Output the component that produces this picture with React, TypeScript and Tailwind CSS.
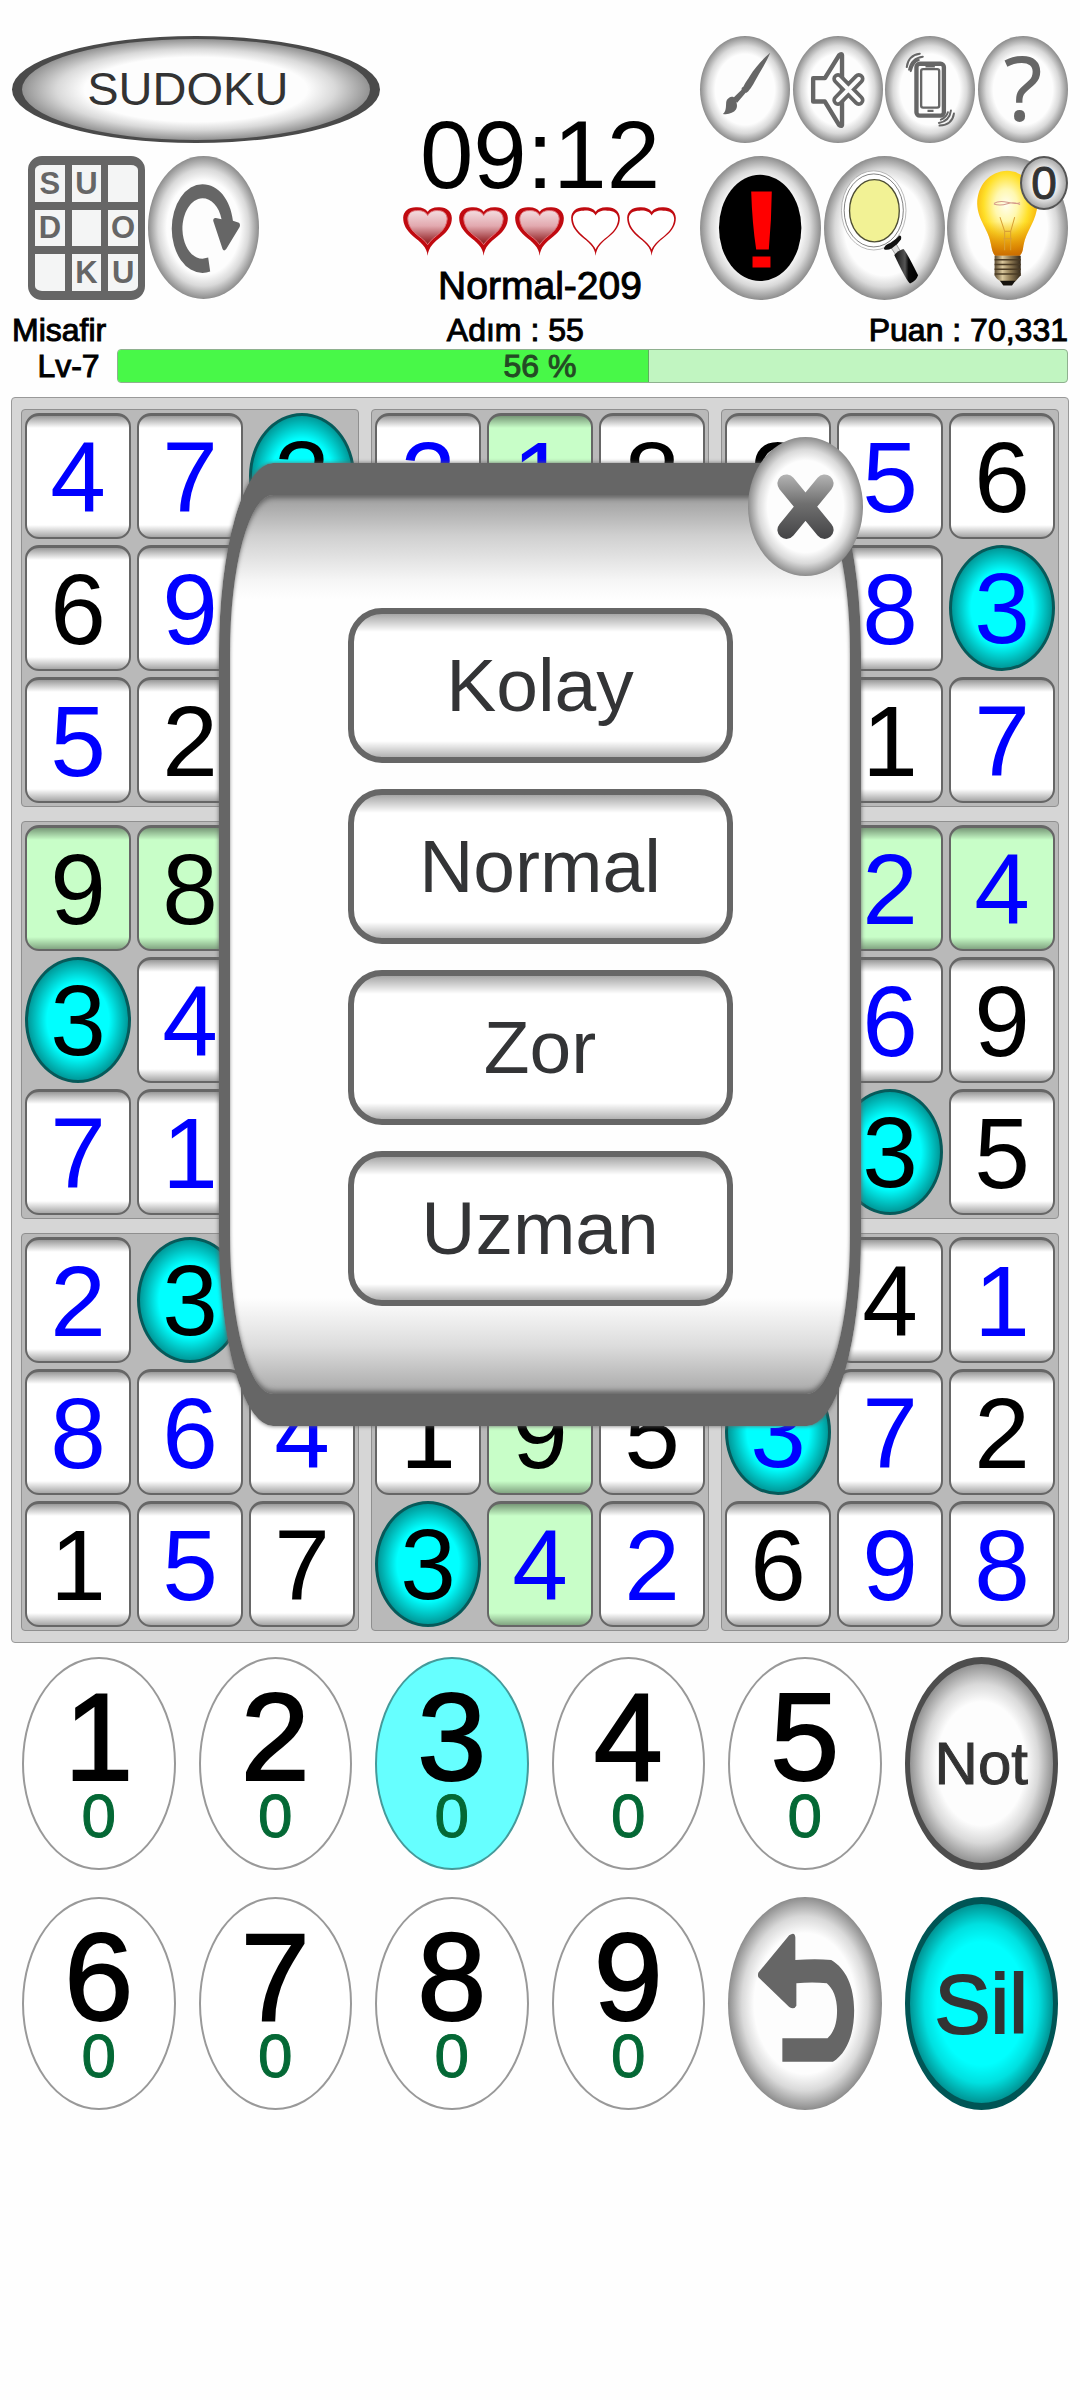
import React from "react";

/* A dot is a cell that lies wholly under the dialog. */
const digits = [
  "473218956",
  "69.....83",
  "52.....17",
  "98.....24",
  "34.....69",
  "71.....35",
  "23.....41",
  "864195372",
  "157342698",
];

/* "b" marks a digit entered by the player, "k" a given one. */
const owners = [
  "bbkbbkkbk",
  "kbbkbkbbb",
  "bkkbkbkkb",
  "kkbkbkbbb",
  "kbkbkbkbk",
  "bbkbkbkkk",
  "bkbkbkbkb",
  "bbbkkkbbk",
  "kbkkbbkbb",
];

const SELECTED_ROW = 3;
const SELECTED_COL = 4;
const SELECTED_DIGIT = "3";

const ellipseFill =
  "rounded-[50%] bg-[radial-gradient(closest-side,#fdfdfd_66%,#d9d9d9_82%,#8c8c8c_100%)]";
const heavyText = "[-webkit-text-stroke:1px_currentColor]";

function Cell({ row, col }: { row: number; col: number }) {
  const digit = digits[row][col];
  const ink = owners[row][col] === "b" ? "text-[#0000ff]" : "text-black";
  let skin =
    "rounded-[14px] border-2 border-t-3 border-[#666] bg-[linear-gradient(to_bottom,rgba(0,0,0,0.4),rgba(0,0,0,0)_12px,rgba(0,0,0,0)_calc(100%-12px),rgba(0,0,0,0.35))] ";
  if (digit === SELECTED_DIGIT) {
    skin =
      "rounded-[50%] border-3 border-[#065a5a] bg-[#00ffff] bg-[radial-gradient(closest-side,rgba(0,0,0,0)_62%,rgba(0,0,0,0.4)_100%)]";
  } else if (row === SELECTED_ROW || col === SELECTED_COL) {
    skin += "bg-[#c8fec8]";
  } else {
    skin += "bg-white";
  }
  return (
    <button
      type="button"
      aria-label={`Satır ${row + 1}, sütun ${col + 1}`}
      className={`flex h-[126px] items-center justify-center text-[100px] leading-[100px] ${skin} ${ink}`}
    >
      {digit === "." ? null : digit}
    </button>
  );
}

function Board() {
  return (
    <div className="grid grid-cols-3 gap-x-3 gap-y-[14px] rounded border border-[#999] bg-[#d6d6d6] px-[9px] py-[11px]">
      {[0, 1, 2, 3, 4, 5, 6, 7, 8].map((block) => (
        <div
          key={block}
          className="grid grid-cols-3 gap-[6px] rounded border border-[#8f8f8f] bg-[#b9b9b9] p-[3px]"
        >
          {[0, 1, 2, 3, 4, 5, 6, 7, 8].map((i) => (
            <Cell
              key={i}
              row={Math.floor(block / 3) * 3 + Math.floor(i / 3)}
              col={(block % 3) * 3 + (i % 3)}
            />
          ))}
        </div>
      ))}
    </div>
  );
}

function Heart({ full }: { full: boolean }) {
  return (
    <svg viewBox="68 320 147 148" className="size-[49px]" aria-hidden="true">
      <defs>
        <linearGradient id="heartFill" x1="0" y1="0" x2="0" y2="1">
          <stop offset="0" stopColor="#f3dcdf" />
          <stop offset="0.45" stopColor="#e2a9af" />
          <stop offset="0.8" stopColor="#a9474b" />
          <stop offset="1" stopColor="#8a1414" />
        </linearGradient>
      </defs>
      <path
        fill="#c00a10"
        d="M142 468C140 440 120 426 98 408C78 391 68 374 68 352C69 333 84 321 106 321C124 320 135 325 142 334C149 325 160 320 178 321C200 321 214 334 215 353C215 375 204 392 184 408C162 426 144 440 142 468Z"
      />
      {full ? (
        <path
          fill="url(#heartFill)"
          stroke="#e0747a"
          strokeWidth="3"
          d="M142 434C134 420 116 410 102 397C90 386 82 370 82 354C84 338 94 331 108 331C124 330 136 334 142 346C148 334 160 330 175 331C190 331 200 340 201 356C200 372 192 386 180 397C166 410 150 420 142 434Z"
        />
      ) : (
        <path
          fill="#fff"
          d="M142 448C136 432 116 418 102 405C84 390 74 374 73 354C74 338 86 331 106 331C124 330 136 334 142 346C148 334 160 330 176 331C198 331 209 338 210 356C209 374 200 390 182 405C166 418 148 432 142 448Z"
        />
      )}
    </svg>
  );
}

function BrushIcon() {
  return (
    <svg viewBox="60 48 268 320" preserveAspectRatio="none" className="size-full" fill="#666">
      <path d="M269 98C250 114 224 142 208 168C198 184 192 192 189 200C184 202 183 206 184 209L158 234C161 237 168 243 170 248L196 218C199 218 204 214 206 210C212 204 218 194 223 184C240 154 262 118 269 98Z" />
      <path d="M158 230C148 230 140 236 138 246C137 260 138 274 128 281C144 284 160 278 167 268C172 260 170 250 168 246C167 238 163 232 158 230Z" />
    </svg>
  );
}

function MutedIcon() {
  return (
    <svg viewBox="337 48 268 320" preserveAspectRatio="none" className="size-full" fill="none" strokeLinecap="round" strokeLinejoin="round">
      <path stroke="#666" strokeWidth="13" d="M397 174H432L474 106Q482 98 483 106V314Q482 320 474 314L432 244H397Z" />
      <path stroke="#666" strokeWidth="34" d="M471 176L533 240M533 176L471 240" />
      <path stroke="#fdfdfd" strokeWidth="12" d="M471 176L533 240M533 176L471 240" />
    </svg>
  );
}

function VibrateIcon() {
  return (
    <svg viewBox="615 48 269 320" preserveAspectRatio="none" className="size-full" fill="none" stroke="#666">
      <rect x="709" y="131" width="82" height="155" rx="10" strokeWidth="13" />
      <rect x="723" y="147" width="54" height="115" rx="6" strokeWidth="7" />
      <path strokeWidth="7" d="M736 139H764M742 272H760" />
      <path strokeWidth="6" strokeLinecap="round" d="M680 141Q684 106 719 101M687 149Q694 114 728 110M692 153Q698 126 716 120M778 316Q816 314 821 280M776 308Q808 302 812 271M782 298Q798 292 803 276" />
    </svg>
  );
}

function AlertIcon() {
  return (
    <svg viewBox="58 408 364 431" preserveAspectRatio="none" className="size-full">
      <ellipse cx="239" cy="623" rx="124" ry="159" fill="#000" />
      <path fill="#f00" d="M212 514H274Q273 600 265 688H227Q215 610 212 514ZM216 709H270V742H216Z" />
    </svg>
  );
}

function MagnifierIcon() {
  return (
    <svg viewBox="432 411 360 426" preserveAspectRatio="none" className="size-full">
      <defs>
        <linearGradient id="grip" x1="0" y1="0" x2="1" y2="0">
          <stop offset="0" stopColor="#111" />
          <stop offset="0.45" stopColor="#555" />
          <stop offset="0.6" stopColor="#0a0a0a" />
          <stop offset="1" stopColor="#000" />
        </linearGradient>
      </defs>
      <ellipse cx="580" cy="572" rx="96" ry="117" fill="#fff" stroke="#999" strokeWidth="2" />
      <ellipse cx="580" cy="572" rx="88" ry="108" fill="none" stroke="#444" strokeWidth="2" />
      <ellipse cx="582" cy="573" rx="74" ry="92" fill="#f2f295" stroke="#4d4d33" strokeWidth="4" />
      <path fill="#ddd" stroke="#777" strokeWidth="2" d="M630 680L646 670L660 694L646 704Z" />
      <path fill="#111" d="M610 686Q612 674 630 668Q648 656 656 646Q664 646 661 658Q652 672 634 684Q618 692 610 686Z" />
      <path fill="url(#grip)" d="M641 704Q652 690 668 686Q674 688 712 764Q706 782 688 788Q680 786 641 704Z" />
    </svg>
  );
}

function BulbIcon() {
  return (
    <svg viewBox="804 411 361 426" preserveAspectRatio="none" className="size-full">
      <defs>
        <radialGradient id="glow" cx="0.48" cy="0.4" r="0.62">
          <stop offset="0" stopColor="#fffef0" />
          <stop offset="0.3" stopColor="#fff8b0" />
          <stop offset="0.6" stopColor="#ffe02a" />
          <stop offset="0.85" stopColor="#f7b50c" />
          <stop offset="1" stopColor="#d98407" />
        </radialGradient>
        <linearGradient id="amber" x1="0" y1="0" x2="0" y2="1">
          <stop offset="0.6" stopColor="#e08a00" stopOpacity="0" />
          <stop offset="1" stopColor="#c96a00" stopOpacity="0.9" />
        </linearGradient>
        <linearGradient id="brass" x1="0" y1="0" x2="1" y2="0">
          <stop offset="0" stopColor="#5b4a30" />
          <stop offset="0.3" stopColor="#d9c79c" />
          <stop offset="0.6" stopColor="#8f7b54" />
          <stop offset="1" stopColor="#33281a" />
        </linearGradient>
      </defs>
      <path fill="url(#glow)" d="M984 455C930 457 895 498 894 552C896 604 930 628 936 676Q940 700 948 706H1020Q1030 700 1032 676C1040 630 1072 604 1074 552C1072 498 1036 457 984 455Z" />
      <path fill="url(#amber)" d="M984 455C930 457 895 498 894 552C896 604 930 628 936 676Q940 700 948 706H1020Q1030 700 1032 676C1040 630 1072 604 1074 552C1072 498 1036 457 984 455Z" />
      <path fill="none" stroke="#d59a8a" strokeWidth="3" d="M944 551Q960 542 984 548Q1008 554 1022 549M944 553Q962 560 984 552Q1006 546 1022 555" />
      <path fill="none" stroke="#d9a035" strokeWidth="3" d="M962 592L976 634V690M1006 592L994 634V690M976 634H994M972 656H998" />
      <path fill="url(#brass)" d="M946 706H1024V764Q1012 778 1006 784H966Q950 774 946 764Z" />
      <path stroke="#4a3b24" strokeWidth="4" d="M946 718H1024M946 732H1024M946 746H1024M946 760H1024" />
      <path fill="#15110c" d="M962 780H1008L998 794H972Z" />
    </svg>
  );
}

function RestartIcon() {
  return (
    <svg viewBox="445 410 332 427" preserveAspectRatio="none" className="size-full" fill="#666">
      <path d="M631 755Q620 759 608 759A92 132 0 0 1 516 627A92 133 0 0 1 608 494C655 494 692 540 699 603L717 609Q722 613 719 622L679 688Q672 696 668 688L640 603Q640 594 648 595L665 599C658 560 634 536 608 536C572 538 548 580 548 630C550 680 576 716 608 717L625 713Z" />
    </svg>
  );
}

function UndoIcon() {
  return (
    <svg viewBox="543 799 449 645" preserveAspectRatio="none" className="size-full" fill="#666">
      <path d="M632 1028L722 915Q739 903 740 922V990Q800 985 845 990C888 1016 912 1070 912 1143C912 1216 890 1272 850 1298H702V1227H834C854 1208 862 1180 862 1143C862 1104 850 1076 832 1060Q790 1056 743 1060V1128Q736 1142 722 1132L632 1042Q629 1035 632 1028Z" />
    </svg>
  );
}

function CloseIcon() {
  return (
    <svg viewBox="205 141 344 416" preserveAspectRatio="none" className="size-full">
      <defs>
        <linearGradient id="cross" gradientUnits="userSpaceOnUse" x1="0" y1="252" x2="0" y2="447">
          <stop offset="0" stopColor="#b5b5b5" />
          <stop offset="0.45" stopColor="#707070" />
          <stop offset="1" stopColor="#434345" />
        </linearGradient>
      </defs>
      <path fill="none" stroke="url(#cross)" strokeWidth="54" strokeLinecap="round" d="M320 280L434 419M434 280L320 419" />
    </svg>
  );
}

function SudokuTiles() {
  return (
    <button
      type="button"
      aria-label="Sudoku"
      className="grid h-36 w-[117px] grid-cols-3 grid-rows-3 gap-x-[7px] gap-y-2 overflow-hidden rounded-[14px] border-x-[7px] border-y-[9px] border-[#666] bg-[#666] text-[31px] leading-none font-bold text-[#666]"
    >
      {["S", "U", "", "D", "", "O", "", "K", "U"].map((letter, i) => (
        <span key={i} className="flex items-center justify-center bg-[#f4f5f5]">
          {letter}
        </span>
      ))}
    </button>
  );
}

function Header() {
  return (
    <header className="px-3 pt-9">
      <div className="grid grid-cols-[7fr_6fr_7fr]">
        <div className="pr-[2px]">
          <button
            type="button"
            className="flex h-[107px] w-full items-center justify-center rounded-[50%] border-x-10 border-y-3 border-[#4a4a4a] bg-[radial-gradient(closest-side,#fdfdfd_64%,#d9d9d9_80%,#929292_100%)] pr-4 text-[47px] text-[#333]"
          >
            SUDOKU
          </button>
          <div className="mt-[13px] flex gap-[3px] pl-4">
            <SudokuTiles />
            <button type="button" aria-label="Yeniden başlat" className={`h-[143px] w-[111px] ${ellipseFill}`}>
              <RestartIcon />
            </button>
          </div>
        </div>

        <div className="flex flex-col items-center pt-[71px]">
          <time className="text-[96px] leading-[96px]">09:12</time>
          <div className="mt-1 flex gap-[7px]">
            {[true, true, true, false, false].map((full, i) => (
              <Heart key={i} full={full} />
            ))}
          </div>
          <p className={`mt-[10px] text-[39px] leading-10 whitespace-nowrap ${heavyText}`}>Normal-209</p>
        </div>

        <div className="pl-[2px]">
          <div className="flex justify-between">
            <button type="button" aria-label="Tema" className={`h-[107px] w-[90px] ${ellipseFill}`}>
              <BrushIcon />
            </button>
            <button type="button" aria-label="Ses" className={`h-[107px] w-[90px] ${ellipseFill}`}>
              <MutedIcon />
            </button>
            <button type="button" aria-label="Titreşim" className={`h-[107px] w-[90px] ${ellipseFill}`}>
              <VibrateIcon />
            </button>
            <button
              type="button"
              className={`flex h-[107px] w-[90px] items-center justify-center pb-2 font-['Noto_Sans'] text-[90px] leading-[90px] text-[#666] ${ellipseFill}`}
            >
              ?
            </button>
          </div>
          <div className="mt-[13px] flex justify-between">
            <button type="button" aria-label="Hata" className={`h-36 w-[121px] ${ellipseFill}`}>
              <AlertIcon />
            </button>
            <button type="button" aria-label="Ara" className={`h-36 w-[121px] ${ellipseFill}`}>
              <MagnifierIcon />
            </button>
            <button type="button" aria-label="İpucu" className={`relative h-36 w-[121px] ${ellipseFill}`}>
              <BulbIcon />
              <span
                className={`absolute top-0 right-0 flex h-[54px] w-12 items-center justify-center rounded-[50%] border-2 border-[#555] bg-[radial-gradient(closest-side,#fdfdfd_50%,#aaa_100%)] text-[46px] leading-none text-[#333] ${heavyText}`}
              >
                0
              </span>
            </button>
          </div>
        </div>
      </div>

      <div className={`mt-2 grid grid-cols-[7fr_3fr_7fr] text-[32px] leading-8 whitespace-nowrap ${heavyText}`}>
        <span>Misafir</span>
        <span>Adım : 55</span>
        <span className="text-right">Puan : 70,331</span>
      </div>

      <div className={`relative mt-[3px] flex h-[34px] items-center text-[32px] leading-8 ${heavyText}`}>
        <span className="w-[105px] shrink-0 pl-2 text-center">Lv-7</span>
        <div
          role="progressbar"
          aria-label="Seviye"
          aria-valuenow={56}
          aria-valuemin={0}
          aria-valuemax={100}
          className="h-full flex-1 overflow-hidden rounded border border-[#8fb08f] bg-[#c1f5c1]"
        >
          <div className="h-full w-[56%] border-r border-[#5fae5f] bg-[#48f848]" />
        </div>
        <span className="absolute inset-0 flex items-center justify-center text-[#244a24]">56 %</span>
      </div>
    </header>
  );
}

function DifficultyDialog() {
  return (
    <div
      role="dialog"
      aria-label="Zorluk"
      className="absolute top-[66px] left-1/2 flex w-[642px] -translate-x-1/2 flex-col items-center gap-[26px] rounded-[54px/190px] border-x-11 border-y-32 border-[#666] bg-[linear-gradient(to_bottom,#9c9c9c,#cfcfcf_40px,#f6f6f6_86px,#fefefe_104px,#fefefe_calc(100%-96px),#dcdcdc_calc(100%-48px),#a8a8a8)] pt-[113px] pb-[88px] shadow-[0_0_4px_#666,inset_0_5px_5px_-2px_#666,inset_0_-5px_5px_-2px_#666]"
    >
      {["Kolay", "Normal", "Zor", "Uzman"].map((level) => (
        <button
          key={level}
          type="button"
          className="h-[155px] w-[385px] rounded-[34px] border-6 border-[#666] bg-white bg-[linear-gradient(to_bottom,rgba(0,0,0,0.35),rgba(0,0,0,0)_18px,rgba(0,0,0,0)_calc(100%-16px),rgba(0,0,0,0.3))] text-[75px] leading-none text-[#333436]"
        >
          {level}
        </button>
      ))}
      <button
        type="button"
        aria-label="Kapat"
        className={`absolute -top-[58px] -right-[13px] h-[139px] w-[115px] ${ellipseFill}`}
      >
        <CloseIcon />
      </button>
    </div>
  );
}

function DigitKey({ digit }: { digit: string }) {
  const skin =
    digit === SELECTED_DIGIT ? "border-[#459a9a] bg-[#66ffff]" : "border-[#999] bg-white";
  return (
    <button
      type="button"
      className={`flex h-[213px] flex-col items-center rounded-[50%] border-2 pt-[30px] ${skin}`}
    >
      <span className="text-[124px] leading-[96px] [-webkit-text-stroke:2px_currentColor]">{digit}</span>
      <span className="text-[62px] leading-[62px] text-[#046835] [-webkit-text-stroke:1px_currentColor]">0</span>
    </button>
  );
}

function Keypad() {
  return (
    <div className="mt-[14px] grid grid-cols-6 gap-x-[23px] gap-y-[27px] px-[22px]">
      {["1", "2", "3", "4", "5"].map((d) => (
        <DigitKey key={d} digit={d} />
      ))}
      <button
        type="button"
        className="h-[213px] rounded-[50%] border-x-5 border-y-7 border-[#4d4d4d] bg-[radial-gradient(closest-side,#fdfdfd_62%,#d9d9d9_80%,#929292_100%)] text-[60px] text-[#333] [-webkit-text-stroke:1px_currentColor]"
      >
        Not
      </button>
      {["6", "7", "8", "9"].map((d) => (
        <DigitKey key={d} digit={d} />
      ))}
      <button type="button" aria-label="Geri al" className={`h-[213px] ${ellipseFill}`}>
        <UndoIcon />
      </button>
      <button
        type="button"
        className="h-[213px] rounded-[50%] border-x-5 border-y-7 border-[#055] bg-[#00ffff] bg-[radial-gradient(closest-side,rgba(0,0,0,0)_62%,rgba(0,0,0,0.12)_80%,rgba(0,0,0,0.42)_100%)] text-[84px] text-[#333] [-webkit-text-stroke:2px_currentColor]"
      >
        Sil
      </button>
    </div>
  );
}

export default function App() {
  return (
    <main className="min-h-screen bg-[#fefefe] pb-8 font-['Liberation_Sans',Arial,sans-serif] text-black">
      <Header />
      <section className="relative mx-[11px] mt-[14px]">
        <Board />
        <DifficultyDialog />
      </section>
      <Keypad />
    </main>
  );
}
